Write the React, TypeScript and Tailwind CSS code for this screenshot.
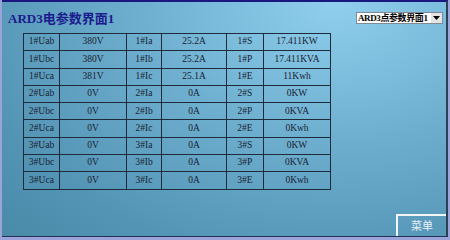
import React from "react";

type Row = [string, string, string, string, string, string];

const rows: Row[] = [
    ["1#Uab", "380V", "1#Ia", "25.2A", "1#S", "17.411KW"],
    ["1#Ubc", "380V", "1#Ib", "25.2A", "1#P", "17.411KVA"],
    ["1#Uca", "381V", "1#Ic", "25.1A", "1#E", "11Kwh"],
    ["2#Uab", "0V", "2#Ia", "0A", "2#S", "0KW"],
    ["2#Ubc", "0V", "2#Ib", "0A", "2#P", "0KVA"],
    ["2#Uca", "0V", "2#Ic", "0A", "2#E", "0Kwh"],
    ["3#Uab", "0V", "3#Ia", "0A", "3#S", "0KW"],
    ["3#Ubc", "0V", "3#Ib", "0A", "3#P", "0KVA"],
    ["3#Uca", "0V", "3#Ic", "0A", "3#E", "0Kwh"],
];

const colWidths = ["w-[36px]", "w-[67px]", "w-[35px]", "w-[65px]", "w-[37px]", "w-[67px]"];

const serif = "font-['Liberation_Serif','Noto_Sans_CJK_SC',serif]";

const PageSelect: React.FC = () => (
    <div className="mt-[10px] mr-[3px] flex h-[12px] w-[87px] items-center border border-[#7f8a96] bg-white">
        <span className={`flex-1 overflow-hidden pl-[1px] text-[9px] font-bold leading-[12px] tracking-[-0.4px] whitespace-nowrap text-black ${serif}`}>
            ARD3点参数界面1
        </span>
        <span className="flex h-full w-[11px] shrink-0 items-center justify-center bg-[#e4e4e4]">
            <svg width="7" height="4" viewBox="0 0 7 4">
                <path d="M0 0 L7 0 L3.5 4 Z" fill="#000" />
            </svg>
        </span>
    </div>
);

const ParamTable: React.FC = () => (
    <table className={`ml-[21px] w-[307px] table-fixed border-collapse ${serif}`}>
        <colgroup>
            {colWidths.map((w, i) => (
                <col key={i} className={w} />
            ))}
        </colgroup>
        <tbody>
            {rows.map((r) => (
                <tr key={r[0]} className="h-[17.3px]">
                    {r.map((cell, i) => (
                        <td
                            key={i}
                            className="border border-[#1d2b3a] p-0 text-center text-[9.5px] leading-none text-[#1a2232]"
                        >
                            {cell}
                        </td>
                    ))}
                </tr>
            ))}
        </tbody>
    </table>
);

export default function App() {
    return (
        <div className="h-[240px] w-[450px] bg-[#9aa4d8] pl-[2px]">
            <div className="flex h-[237px] w-[446px] flex-col border-t-2 border-r-2 border-b border-t-[#18187e] border-r-[#2a4258] border-b-[#26305a] bg-[radial-gradient(ellipse_at_75%_0%,#90cfee_0%,#6fb0d0_40%,#5393b3_80%,#4a8aa9_100%)]">
                {/* Header */}
                <div className="flex h-[31px] items-start justify-between">
                    <h1 className={`pt-[8px] pl-[6px] text-[13px] leading-[17px] font-bold text-[#1b1b8e] ${serif}`}>
                        ARD3电参数界面1
                    </h1>
                    <PageSelect />
                </div>

                <ParamTable />

                {/* Footer */}
                <div className="mt-auto flex justify-end">
                    <button
                        className={`flex h-[22px] w-[50px] items-center justify-center border-t-2 border-l-2 border-[#f2f6fa] text-[11px] text-[#e8f0f7] ${serif}`}
                    >
                        菜单
                    </button>
                </div>
            </div>
        </div>
    );
}
